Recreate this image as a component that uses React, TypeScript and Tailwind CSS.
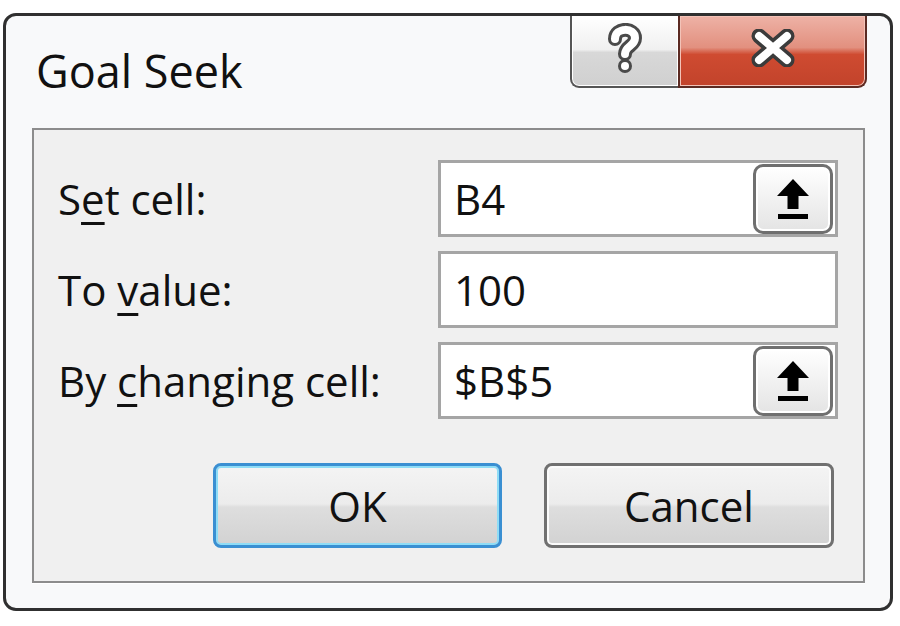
import React from "react";

function PickerButton() {
  return (
    <div className="mr-[2px] flex h-[70px] w-[80px] shrink-0 items-center justify-center rounded-[10px] border-[3px] border-[#6f6f6f] bg-gradient-to-b from-[#ffffff] to-[#e4e4e4] shadow-[inset_0_0_0_2px_#ffffff]">
      <svg width="34" height="42" viewBox="0 0 34 42">
        <path d="M17 1 L33 18 L22.5 18 L22.5 31 L11.5 31 L11.5 18 L1 18 Z" fill="#000" />
        <rect x="2" y="36" width="30" height="5" fill="#000" />
      </svg>
    </div>
  );
}

function Field({ value, picker }: { value: string; picker?: boolean }) {
  return (
    <div className="flex h-[77px] w-[400px] items-center border-[3px] border-[#a5a5a5] bg-white">
      <div className="flex-1 pl-[13px] text-[42px] leading-none">{value}</div>
      {picker && <PickerButton />}
    </div>
  );
}

function Key({ children }: { children: React.ReactNode }) {
  return (
    <span className="underline decoration-[3px] underline-offset-[7px] [text-decoration-skip-ink:none]">
      {children}
    </span>
  );
}

export default function App() {
  return (
    <div className="h-[626px] w-[900px] bg-white pl-[3px] pt-[13px] font-['Open_Sans',sans-serif] font-medium text-[#111]">
      <div className="flex h-[598px] w-[890px] flex-col overflow-hidden rounded-[13px] border-[3px] border-[#303030] bg-[#f8f9fa]">
        {/* title bar */}
        <div className="flex h-[112px] shrink-0">
          <div className="flex-1 pl-[30px] pt-[32px] text-[45px] leading-none">Goal Seek</div>
          <div className="mr-[23px] flex h-[72px] self-start">
            <div className="flex w-[108px] items-center justify-center rounded-bl-[9px] border-b-2 border-l-2 border-[#555] bg-[linear-gradient(#ffffff,#f0f0f0_48%,#d8d8d8_52%,#d0d0d0)] shadow-[inset_0_0_0_1px_#ffffff]">
              <svg width="36" height="52" viewBox="0 0 36 52" className="-mt-[4px]">
                <path d="M8 16 C8 4 28 4 28 15 C28 23 18 23 18 31" fill="none" stroke="#4a4a4a" strokeWidth="14" strokeLinecap="round" />
                <circle cx="18" cy="43" r="7" fill="#4a4a4a" />
                <path d="M8 16 C8 4 28 4 28 15 C28 23 18 23 18 31" fill="none" stroke="#ffffff" strokeWidth="8" strokeLinecap="round" />
                <circle cx="18" cy="43" r="4" fill="#ffffff" />
              </svg>
            </div>
            <div className="flex w-[189px] items-center justify-center rounded-br-[9px] border-x-2 border-b-2 border-[#5b2a22] bg-[linear-gradient(#eeb2a6,#e2907f_45%,#cf4b31_55%,#c2432b)] shadow-[inset_0_0_0_1px_#f3c3b8]">
              <svg width="46" height="38" viewBox="0 0 46 38" className="-mt-[6px]">
                <path d="M9 7 L37 31 M37 7 L9 31" stroke="#3b3b3b" strokeWidth="15" strokeLinecap="round" />
                <path d="M9 7 L37 31 M37 7 L9 31" stroke="#ffffff" strokeWidth="8" strokeLinecap="round" />
              </svg>
            </div>
          </div>
        </div>

        {/* client area */}
        <div className="mb-[25px] ml-[26px] mr-[25px] flex flex-1 flex-col border-2 border-[#8c8c8c] bg-[#f0f0f0] pl-[24px] pt-[30px] shadow-[0_1px_0_#ffffff]">
          <div className="grid grid-cols-[380px_400px] items-center gap-y-[14px] text-[42px] leading-none">
            <div>
              S<Key>e</Key>t cell:
            </div>
            <Field value="B4" picker />
            <div>
              To <Key>v</Key>alue:
            </div>
            <Field value="100" />
            <div>
              By <Key>c</Key>hanging cell:
            </div>
            <Field value="$B$5" picker />
          </div>

          <div className="mt-[44px] flex justify-end gap-[42px] pr-[29px]">
            <button className="flex h-[85px] w-[289px] items-center justify-center rounded-[8px] border-[3px] border-[#3a8fd2] bg-[linear-gradient(#f4f4f4,#ececec_48%,#dedede_52%,#d2d2d2)] text-[42px] leading-none shadow-[inset_0_0_0_2px_#8edcf6]">
              OK
            </button>
            <button className="flex h-[85px] w-[290px] items-center justify-center rounded-[8px] border-[3px] border-[#707070] bg-[linear-gradient(#f4f4f4,#ececec_48%,#dedede_52%,#d2d2d2)] text-[42px] leading-none shadow-[inset_0_0_0_2px_#fbfbfb]">
              Cancel
            </button>
          </div>
        </div>
      </div>
    </div>
  );
}
